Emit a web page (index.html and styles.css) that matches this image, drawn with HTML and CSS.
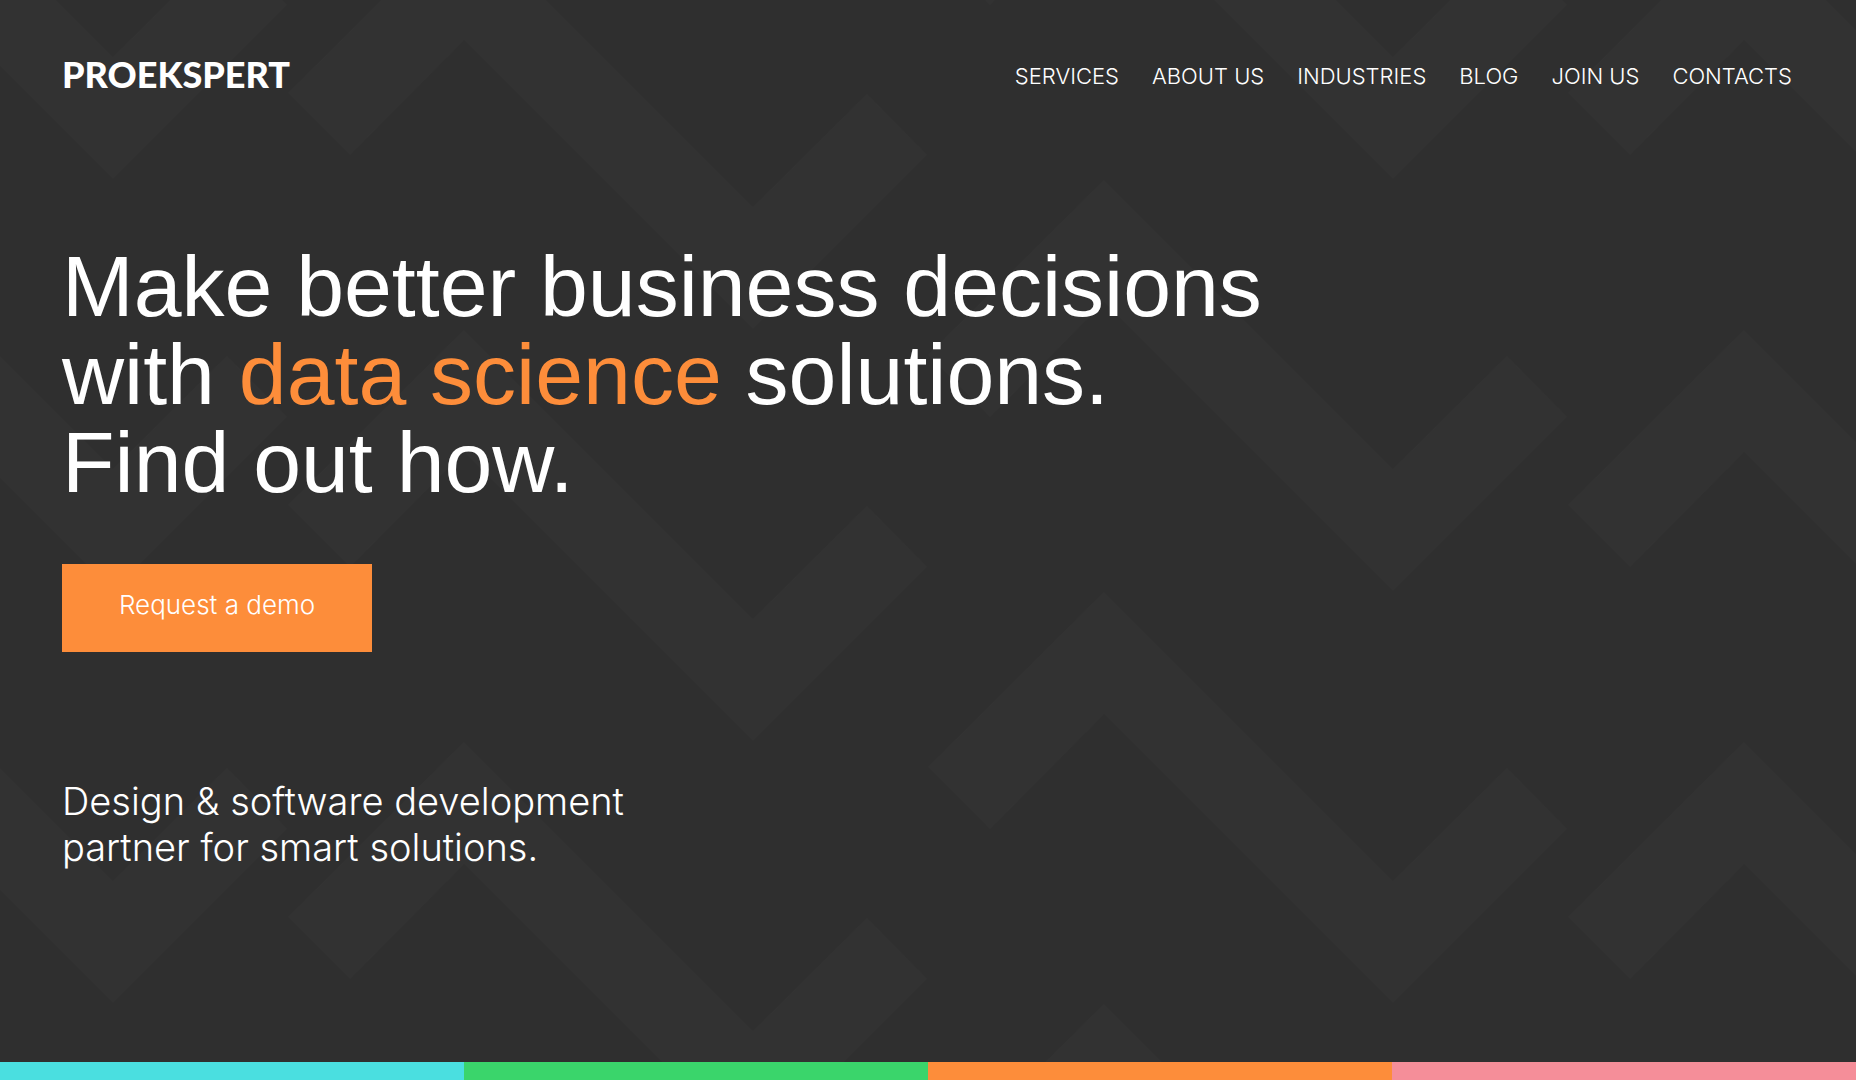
FILE: index.html
```html
<!DOCTYPE html>
<html lang="en">
<head>
<meta charset="utf-8">
<meta name="viewport" content="width=device-width, initial-scale=1">
<title>Proekspert</title>
<link rel="stylesheet" href="styles.css">
</head>
<body>
<svg class="backdrop" aria-hidden="true">
  <defs>
    <path id="zigzag" d="M0 0 176-175 465 114 579 1 639 62 465 236 176-53 62 62Z"/>
    <pattern id="zigzags" width="1280" height="412" patternUnits="userSpaceOnUse">
      <g class="zigzag">
        <use href="#zigzag" x="928" y="355"/>
        <use href="#zigzag" x="928" y="-57"/>
        <use href="#zigzag" x="-352" y="355"/>
        <use href="#zigzag" x="-352" y="-57"/>
        <use href="#zigzag" x="288" y="93"/>
        <use href="#zigzag" x="288" y="505"/>
      </g>
    </pattern>
  </defs>
  <rect width="100%" height="100%" fill="url(#zigzags)"/>
</svg>
<div class="page">
  <header class="header">
    <a class="logo" href="#">PROEKSPERT</a>
    <nav class="nav">
      <a href="#">SERVICES</a>
      <a href="#">ABOUT US</a>
      <a href="#">INDUSTRIES</a>
      <a href="#">BLOG</a>
      <a href="#">JOIN US</a>
      <a href="#">CONTACTS</a>
    </nav>
  </header>
  <main class="hero">
    <h1 class="headline">Make better business decisions<br>with <a href="#">data science</a> solutions.<br>Find out how.</h1>
    <button class="cta" type="button">Request a demo</button>
    <p class="tagline">Design &amp; software development<br>partner for smart solutions.</p>
  </main>
  <div class="stripes">
    <span class="stripe cyan"></span>
    <span class="stripe green"></span>
    <span class="stripe orange"></span>
    <span class="stripe pink"></span>
  </div>
</div>
</body>
</html>
```
FILE: styles.css
```css
* { box-sizing: border-box; }
body {
  margin: 0;
  background: #2f2f2f;
  color: #fff;
  font-family: Inter, "Liberation Sans", sans-serif;
}
a { color: inherit; text-decoration: none; }
.backdrop {
  position: absolute;
  inset: 0;
  width: 100%;
  height: 100%;
  z-index: -1;
}
.zigzag { fill: #323232; }
.page {
  display: flex;
  flex-direction: column;
  min-height: 100vh;
}
.header {
  display: flex;
  justify-content: space-between;
  align-items: center;
  padding: 48px 64px 0 62px;
}
.logo {
  font-family: Lato, sans-serif;
  font-weight: 900;
  font-size: 36px;
  line-height: 52px;
}
.nav {
  display: flex;
  gap: 33px;
  padding-top: 4px;
  font-size: 22px;
  font-weight: 300;
  line-height: 32px;
}
.hero {
  flex: 1;
  padding: 142px 62px 0;
}
.headline {
  margin: 0 0 58px;
  font-family: "Liberation Sans", Arial, sans-serif;
  font-size: 86px;
  font-weight: 400;
  line-height: 88px;
}
.headline a { color: #fd8d3a; }
.cta {
  display: block;
  min-width: 310px;
  padding: 29px 56px 35px;
  border: 0;
  background: #fd8d3a;
  color: #fff;
  font: 300 26px/24px Inter, "Liberation Sans", sans-serif;
}
.tagline {
  margin: 126px 0 0;
  font-size: 38px;
  font-weight: 300;
  line-height: 46px;
}
.stripes {
  display: flex;
  height: 18px;
}
.stripe { flex: 1; }
.cyan { background: #4adfe0; }
.green { background: #3ad56b; }
.orange { background: #fd8d3a; }
.pink { background: #f58e99; }
```
